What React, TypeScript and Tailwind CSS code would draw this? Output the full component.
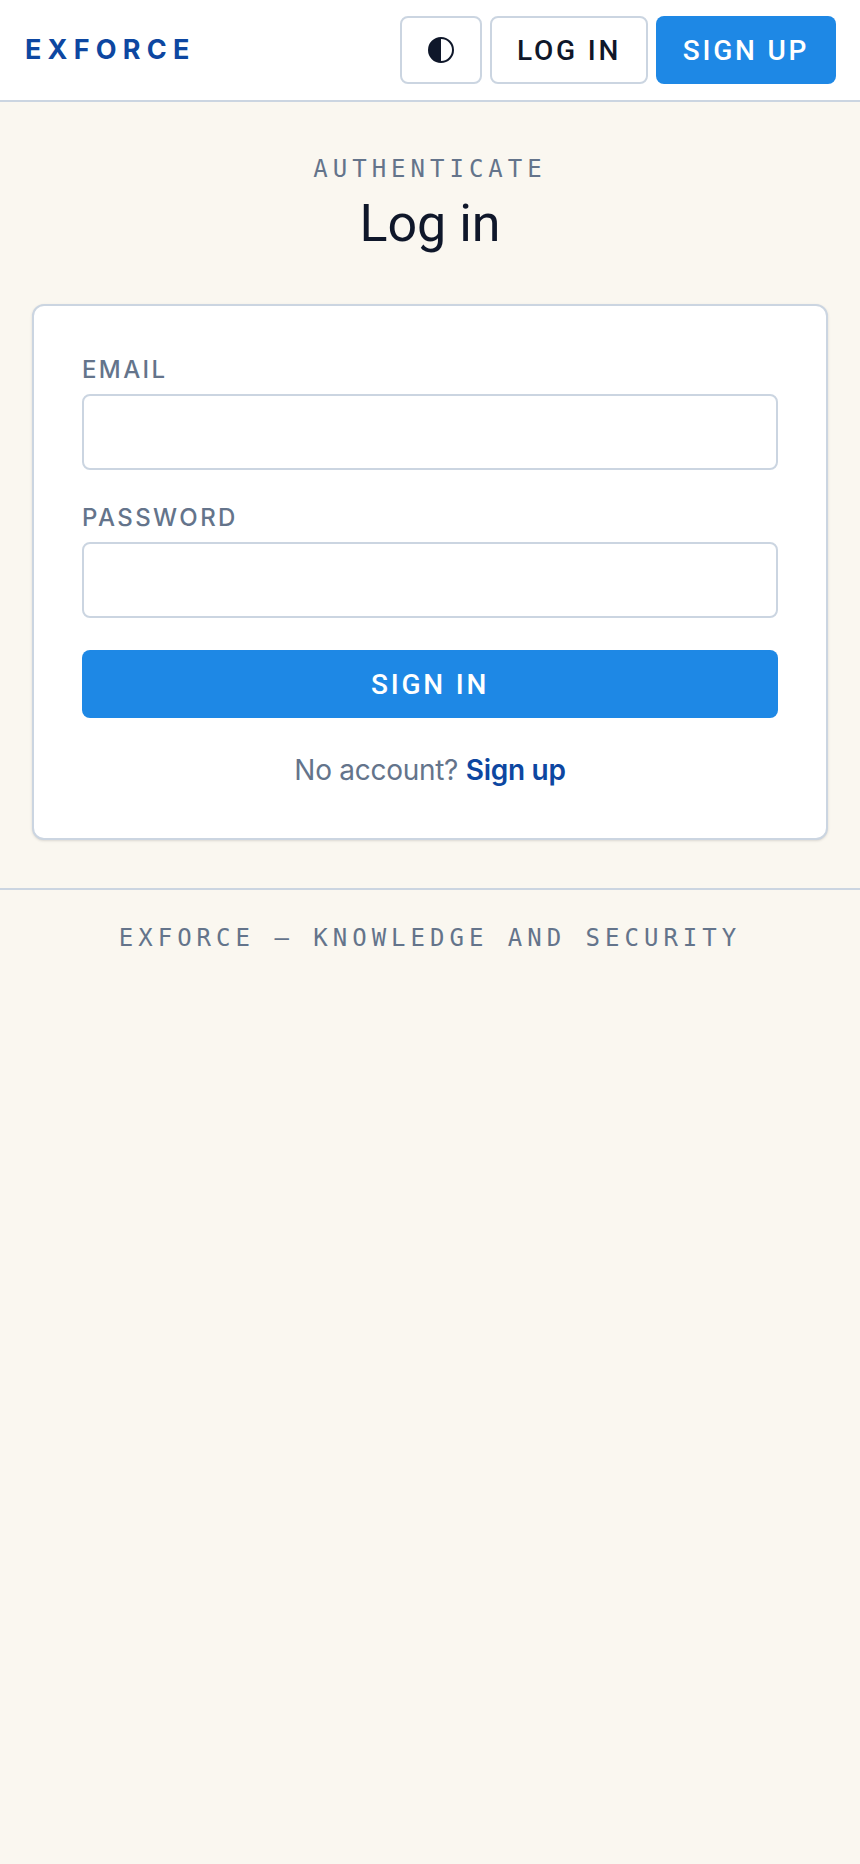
const DISPLAY = "font-['Roboto',sans-serif]";
const MONO = "font-['DejaVu_Sans_Mono',monospace]";
const BODY = "font-['Inter',sans-serif]";

function ContrastIcon() {
  return (
    <svg width="28" height="28" viewBox="0 0 28 28" aria-hidden="true">
      <circle cx="14" cy="14" r="12" fill="none" stroke="#0f172a" strokeWidth="2" />
      <path d="M14 2a12 12 0 0 0 0 24z" fill="#0f172a" />
    </svg>
  );
}

function Field({ label }: { label: string }) {
  return (
    <div>
      <label className={`block text-[24px] leading-[32px] tracking-[0.1em] font-medium text-[#64748b] ${BODY}`}>{label}</label>
      <input className="mt-[8px] block w-full h-[76px] bg-white border-2 border-[#cbd5e1] rounded-[8px]" />
    </div>
  );
}

export default function App() {
  return (
    <div className={`min-h-[1864px] bg-[#faf7f0] ${BODY}`}>
      {/* Header */}
      <header className="h-[102px] bg-white border-b-2 border-[#cbd5e1] flex items-center justify-between pl-[25px] pr-[24px]">
        <span className={`pt-[1px] text-[27px] font-bold tracking-[0.23em] text-[#0d47a1] ${BODY}`}>EXFORCE</span>
        <div className="flex gap-[8px]">
          <button className="w-[82px] h-[68px] flex items-center justify-center bg-white border-2 border-[#cbd5e1] rounded-[8px]">
            <ContrastIcon />
          </button>
          <button className={`w-[158px] h-[68px] pt-[1px] bg-white border-2 border-[#cbd5e1] rounded-[8px] text-[28px] font-medium tracking-[0.1em] text-[#0f172a] ${DISPLAY}`}>LOG IN</button>
          <button className={`w-[180px] h-[68px] pt-[1px] bg-[#1e88e5] rounded-[8px] text-[28px] font-medium tracking-[0.1em] text-white ${DISPLAY}`}>SIGN UP</button>
        </div>
      </header>

      {/* Main */}
      <main className="px-[32px] pt-[51px]">
        <p className={`text-center text-[24px] leading-[32px] tracking-[5px] text-[#64748b] ${MONO}`}>AUTHENTICATE</p>
        <h1 className={`mt-[5px] text-center text-[52px] leading-[68px] font-normal text-[#0f172a] ${DISPLAY}`}>Log in</h1>

        <div className="mt-[46px] bg-white border-2 border-[#cbd5e1] rounded-[12px] shadow-sm px-[48px] pt-[48px] pb-[50px]">
          <div className="flex flex-col gap-[32px]">
            <Field label="EMAIL" />
            <Field label="PASSWORD" />
          </div>
          <button className={`mt-[32px] w-full h-[68px] pt-[1px] bg-[#1e88e5] rounded-[8px] text-[28px] font-medium tracking-[0.1em] text-white ${DISPLAY}`}>SIGN IN</button>
          <p className="mt-[34px] text-center text-[28px] leading-[36px] tracking-[-0.01em] text-[#64748b]">
            No account? <a className="font-semibold text-[#0d47a1]">Sign up</a>
          </p>
        </div>
      </main>

      {/* Footer */}
      <footer className="mt-[48px] border-t-2 border-[#cbd5e1] pt-[32px] text-center">
        <p className={`text-[24px] leading-[32px] tracking-[5px] text-[#64748b] ${MONO}`}>EXFORCE — KNOWLEDGE AND SECURITY</p>
      </footer>
    </div>
  );
}
